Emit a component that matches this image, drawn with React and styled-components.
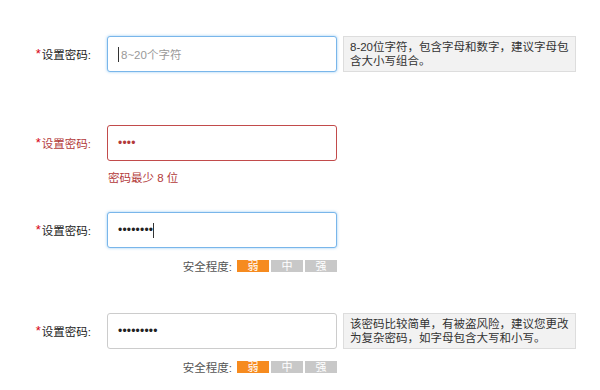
import React from "react";
import styled, { createGlobalStyle, css } from "styled-components";

const GlobalStyle = createGlobalStyle`
  body {
    margin: 0;
    background: #ffffff;
    font-family: "Liberation Sans", "Noto Sans CJK SC", sans-serif;
    font-size: 11.5px;
    color: #333333;
  }
`;

const Form = styled.div`
  display: flex;
  flex-direction: column;
  padding-top: 36px;
`;

const Field = styled.div`
  display: grid;
  grid-template-columns: 101px 230px 240px;
  column-gap: 6px;
  row-gap: ${(p) => p.rowGap || 10}px;
  margin-bottom: ${(p) => p.gap}px;
  align-items: start;
`;

const Label = styled.label`
  height: 36px;
  display: flex;
  align-items: center;
  justify-content: flex-end;
  padding-right: 10px;
  color: ${(p) => (p.error ? "#b33a3a" : "#222222")};
  font-size: 11.5px;
`;

const Star = styled.span`
  color: #d7000f;
  font-size: 13px;
  margin-right: 1px;
  position: relative;
  top: -1px;
`;

const Input = styled.div`
  box-sizing: border-box;
  height: 36px;
  display: flex;
  align-items: center;
  padding: 0 10px;
  border-radius: 3px;
  background: #ffffff;
  border: 1px solid #cccccc;
  color: #222222;
  ${(p) =>
    p.state === "focus" &&
    css`
      border-color: #79b6ea;
      box-shadow: 0 0 3px rgba(82, 168, 236, 0.6);
    `}
  ${(p) =>
    p.state === "error" &&
    css`
      border-color: #c24b4b;
      color: #b33a3a;
    `}
`;

const Caret = styled.span`
  display: inline-block;
  width: 1px;
  height: 15px;
  background: #333333;
  margin: 0 2px 0 0;
`;

const Placeholder = styled.span`
  color: #999999;
  font-size: 11.5px;
`;

const Dots = styled.span`
  font-size: 12px;
  letter-spacing: 0.2px;
  line-height: 1;
`;

const Tip = styled.div`
  box-sizing: border-box;
  width: 233px;
  height: 36px;
  padding: 3px 6px;
  background: #f2f2f2;
  border: 1px solid #dddddd;
  font-size: 11.5px;
  line-height: 14px;
  color: #333333;
`;

const ErrorText = styled.div`
  grid-column: 2;
  color: #b33a3a;
  font-size: 11.5px;
  line-height: 16px;
  padding-left: 1px;
`;

const Strength = styled.div`
  grid-column: 2;
  display: flex;
  justify-content: flex-end;
  align-items: center;
  gap: 2px;
  height: 12px;
`;

const StrengthLabel = styled.span`
  color: #555555;
  font-size: 11.5px;
  margin-right: 3px;
`;

const Level = styled.span`
  width: 32px;
  height: 12px;
  line-height: 12px;
  text-align: center;
  font-size: 11px;
  color: #ffffff;
  background: ${(p) => (p.active ? "#f68b1f" : "#c8c8c8")};
`;

const StrengthMeter = () => (
  <Strength>
    <StrengthLabel>安全程度:</StrengthLabel>
    <Level active>弱</Level>
    <Level>中</Level>
    <Level>强</Level>
  </Strength>
);

const FieldLabel = ({ error }) => (
  <Label error={error}>
    <Star>*</Star>设置密码:
  </Label>
);

export default function App() {
  return (
    <>
      <GlobalStyle />
      <Form>
        <Field gap={53}>
          <FieldLabel />
          <Input state="focus">
            <Caret />
            <Placeholder>8~20个字符</Placeholder>
          </Input>
          <Tip>8-20位字符，包含字母和数字，建议字母包含大小写组合。</Tip>
        </Field>

        <Field gap={26} rowGap={9}>
          <FieldLabel error />
          <Input state="error">
            <Dots>••••</Dots>
          </Input>
          <div />
          <ErrorText>密码最少 8 位</ErrorText>
        </Field>

        <Field gap={41} rowGap={12}>
          <FieldLabel />
          <Input state="focus">
            <Dots>••••••••</Dots>
            <Caret />
          </Input>
          <div />
          <StrengthMeter />
        </Field>

        <Field gap={0} rowGap={12}>
          <FieldLabel />
          <Input>
            <Dots>•••••••••</Dots>
          </Input>
          <Tip>该密码比较简单，有被盗风险，建议您更改为复杂密码，如字母包含大写和小写。</Tip>
          <StrengthMeter />
        </Field>
      </Form>
    </>
  );
}
